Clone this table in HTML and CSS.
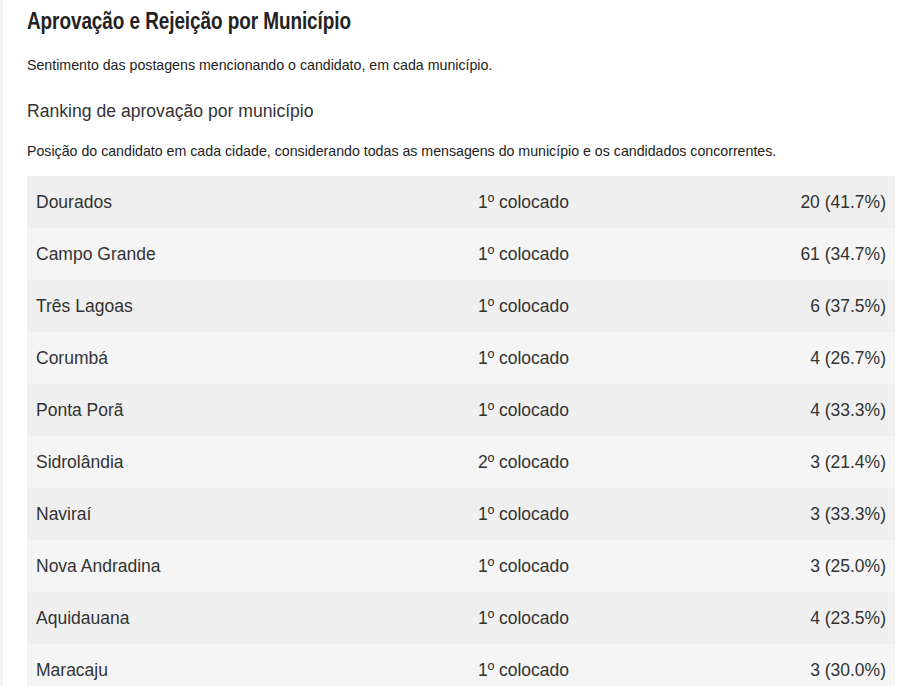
FILE: index.html
```html
<!DOCTYPE html>
<html lang="pt-BR">
<head>
<meta charset="utf-8">
<title>Aprovação e Rejeição por Município</title>
<link rel="stylesheet" href="styles.css">
</head>
<body>
<div class="page">
  <main class="content">
    <h1 class="title"><span class="title-text">Aprovação e Rejeição por Município</span></h1>
    <p class="desc desc-top">Sentimento das postagens mencionando o candidato, em cada município.</p>
    <h2 class="subtitle">Ranking de aprovação por município</h2>
    <p class="desc desc-sub">Posição do candidato em cada cidade, considerando todas as mensagens do município e os candidados concorrentes.</p>
    <div class="table">
      <div class="row"><span class="city">Dourados</span><span class="pos">1º colocado</span><span class="val">20 (41.7%)</span></div>
      <div class="row"><span class="city">Campo Grande</span><span class="pos">1º colocado</span><span class="val">61 (34.7%)</span></div>
      <div class="row"><span class="city">Três Lagoas</span><span class="pos">1º colocado</span><span class="val">6 (37.5%)</span></div>
      <div class="row"><span class="city">Corumbá</span><span class="pos">1º colocado</span><span class="val">4 (26.7%)</span></div>
      <div class="row"><span class="city">Ponta Porã</span><span class="pos">1º colocado</span><span class="val">4 (33.3%)</span></div>
      <div class="row"><span class="city">Sidrolândia</span><span class="pos">2º colocado</span><span class="val">3 (21.4%)</span></div>
      <div class="row"><span class="city">Naviraí</span><span class="pos">1º colocado</span><span class="val">3 (33.3%)</span></div>
      <div class="row"><span class="city">Nova Andradina</span><span class="pos">1º colocado</span><span class="val">3 (25.0%)</span></div>
      <div class="row"><span class="city">Aquidauana</span><span class="pos">1º colocado</span><span class="val">4 (23.5%)</span></div>
      <div class="row"><span class="city">Maracaju</span><span class="pos">1º colocado</span><span class="val">3 (30.0%)</span></div>
    </div>
  </main>
</div>
</body>
</html>
```
FILE: styles.css
```css
html, body {
  margin: 0;
  padding: 0;
  background: #ffffff;
}
body {
  font-family: "Liberation Sans", Arial, sans-serif;
  color: #333333;
}
.page {
  border-left: 3px solid #f3f3f3;
  min-height: 686px;
}
.content {
  padding: 7px 23px 0 24px;
}
.title {
  margin: 0;
  font-family: "Liberation Sans", Arial, sans-serif;
  font-weight: bold;
  font-size: 24px;
  line-height: 28px;
  color: #222222;
  white-space: nowrap;
}
.title-text {
  display: inline-block;
  transform: scaleX(0.79);
  transform-origin: left center;
  letter-spacing: -0.1px;
}
.desc {
  margin: 0;
  font-size: 14.2px;
  line-height: 16px;
  color: #222222;
}
.desc-top {
  margin-top: 22px;
}
.subtitle {
  margin: 28px 0 0;
  font-weight: normal;
  font-size: 17.6px;
  line-height: 20px;
  color: #333333;
}
.desc-sub {
  margin-top: 22px;
}
.table {
  margin-top: 17px;
  display: flex;
  flex-direction: column;
}
.row {
  display: grid;
  grid-template-columns: 442px 1fr auto;
  align-items: center;
  height: 52px;
  padding: 0 9px;
  font-size: 17.5px;
  color: #333333;
}
.row:nth-child(odd) {
  background: #efefef;
}
.row:nth-child(even) {
  background: #f5f5f5;
}
.city {
  grid-column: 1;
}
.pos {
  grid-column: 2;
}
.val {
  grid-column: 3;
  text-align: right;
}
```
